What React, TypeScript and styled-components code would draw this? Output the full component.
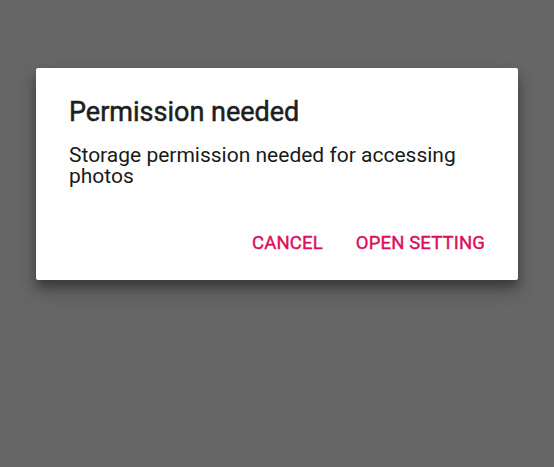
import * as React from "react"
import styled, { createGlobalStyle } from "styled-components"

const GlobalStyle = createGlobalStyle`
  html, body {
    margin: 0;
    padding: 0;
    height: 100%;
    background: #666666;
    font-family: Roboto, "Liberation Sans", sans-serif;
  }
  #root {
    height: 100%;
  }
`

const Screen = styled.div`
  width: 554px;
  height: 467px;
  background: #666666;
  padding: 68px 36px 0 36px;
  box-sizing: border-box;
`

const Dialog = styled.div`
  width: 482px;
  height: 212px;
  box-sizing: border-box;
  background: #ffffff;
  border-radius: 2px;
  box-shadow: 0 10px 18px rgba(0, 0, 0, 0.3), 0 6px 8px rgba(0, 0, 0, 0.22);
  padding: 28px 0 0 33px;
  display: flex;
  flex-direction: column;
`

const Title = styled.h2`
  margin: 0;
  font-size: 27px;
  line-height: 32px;
  font-weight: 400;
  -webkit-text-stroke: 0.5px #1e1e1e;
  color: #1e1e1e;
`

const Message = styled.p`
  margin: 17px 0 0 0;
  padding-right: 30px;
  font-size: 21px;
  line-height: 21px;
  font-weight: 400;
  color: #1a1a1a;
`

const Actions = styled.div`
  margin-top: auto;
  display: flex;
  justify-content: flex-end;
  gap: 33px;
  padding: 0 33px 26px 0;
`

const ActionButton = styled.button`
  border: none;
  background: none;
  padding: 0;
  font-family: Roboto, "Liberation Sans", sans-serif;
  font-size: 18.5px;
  line-height: 22px;
  font-weight: 400;
  -webkit-text-stroke: 0.4px #dc0d5c;
  color: #dc0d5c;
  letter-spacing: 0.15px;
  cursor: pointer;
`

export default function App() {
  return (
    <>
      <GlobalStyle />
      <Screen>
        <Dialog>
          <Title>Permission needed</Title>
          <Message>Storage permission needed for accessing photos</Message>
          <Actions>
            <ActionButton>CANCEL</ActionButton>
            <ActionButton>OPEN SETTING</ActionButton>
          </Actions>
        </Dialog>
      </Screen>
    </>
  )
}
